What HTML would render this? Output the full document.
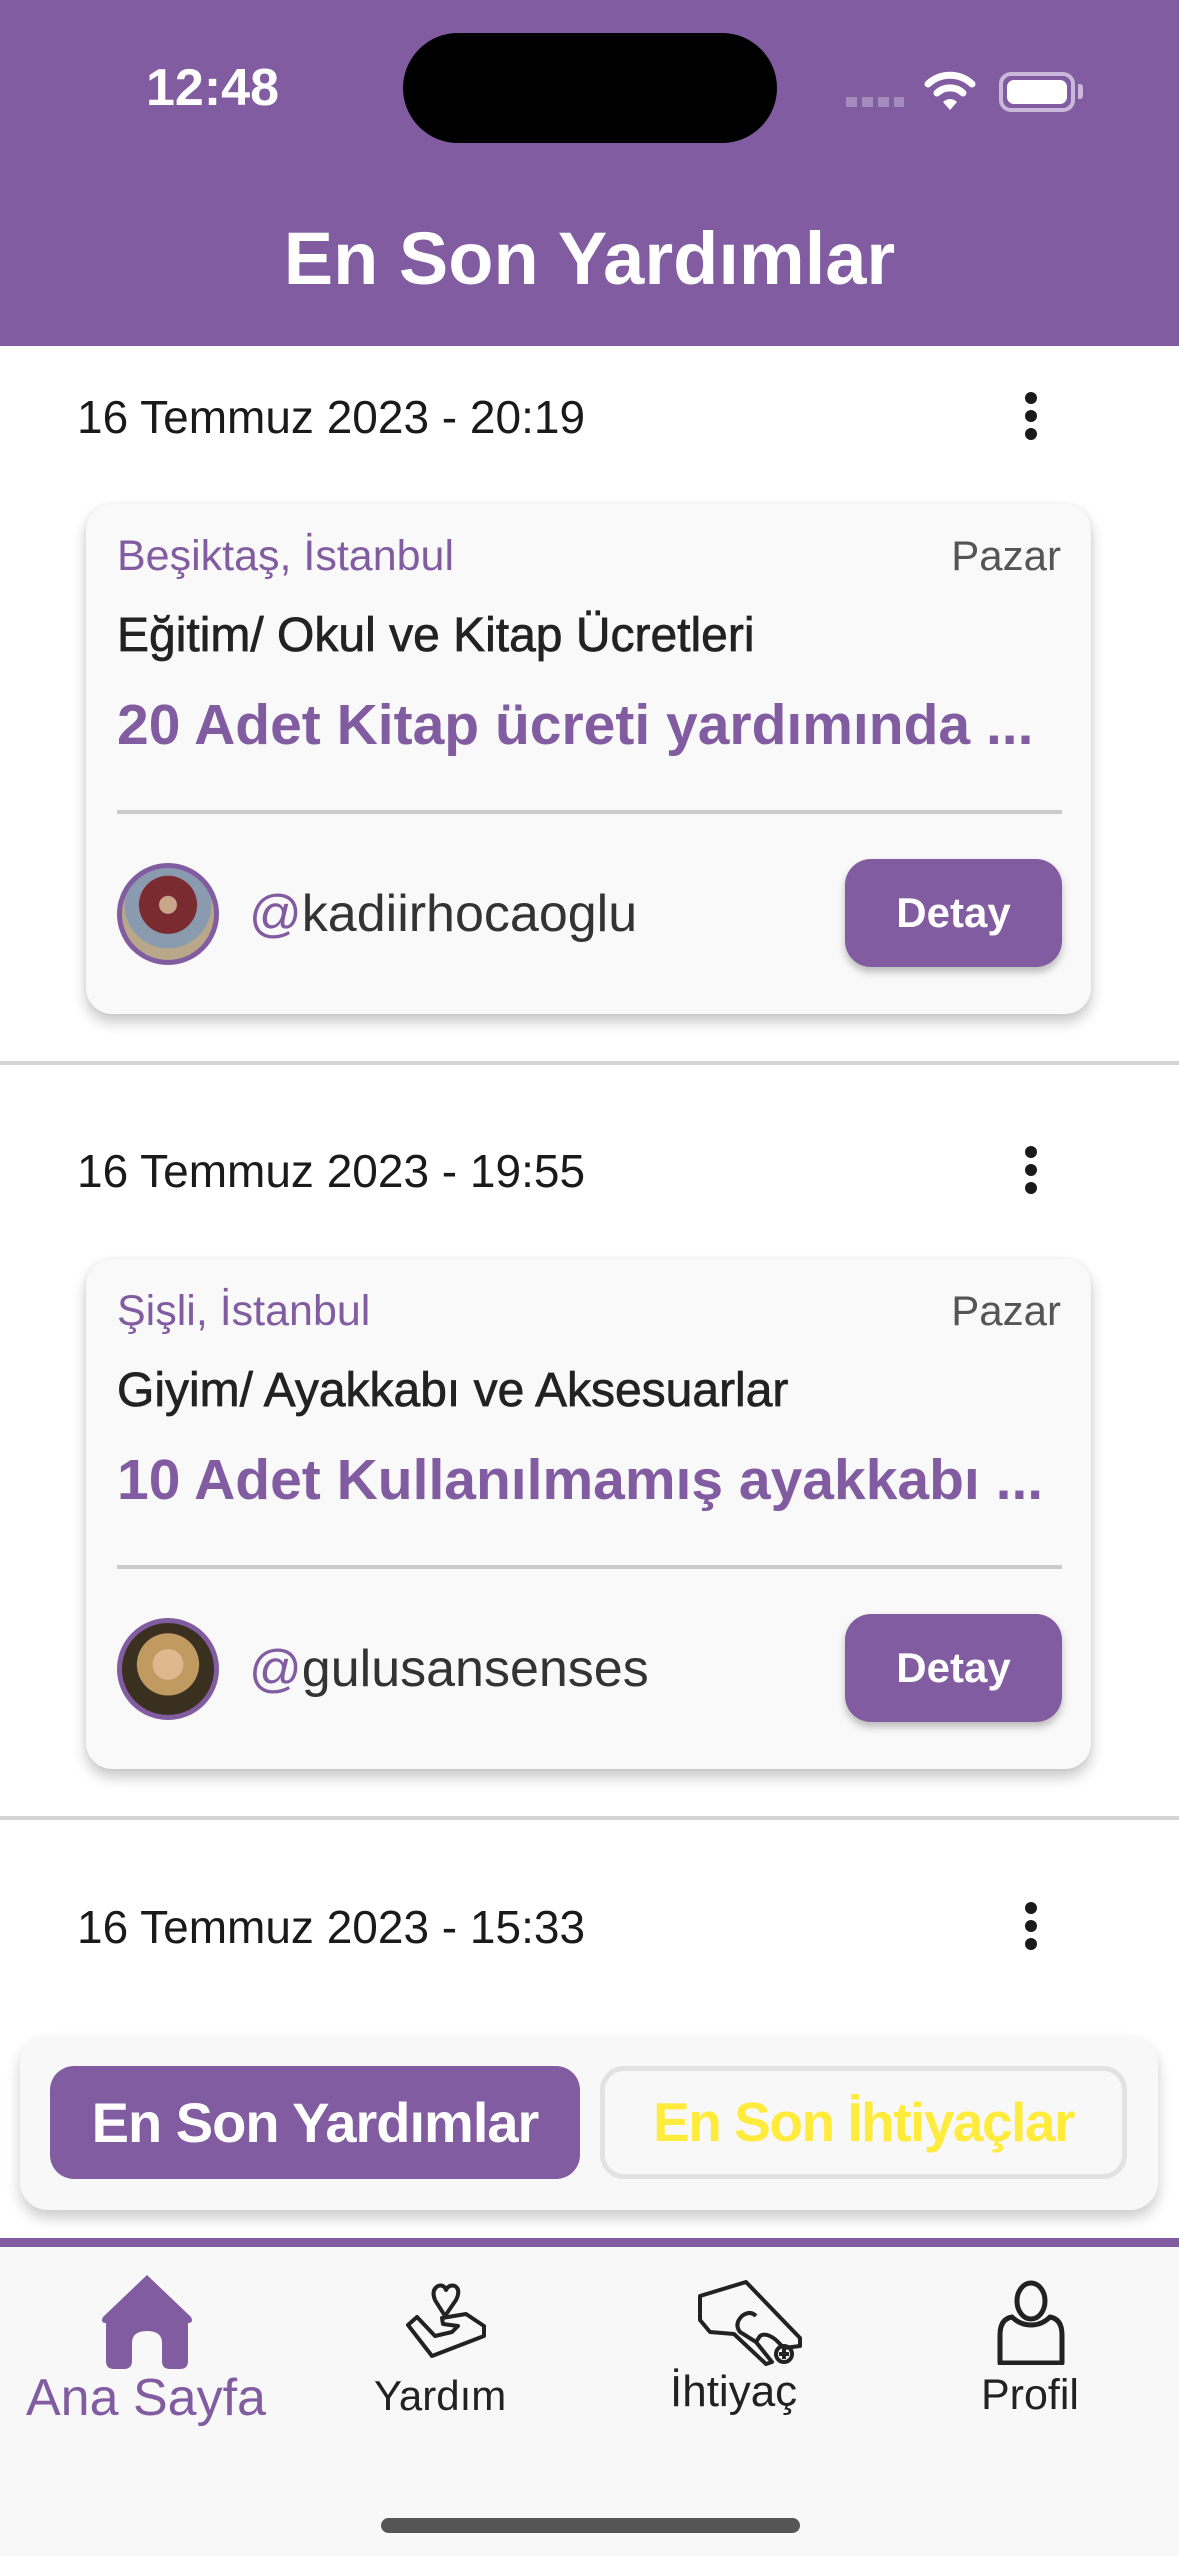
<!DOCTYPE html>
<html><head><meta charset="utf-8"><style>
*{margin:0;padding:0;box-sizing:border-box}
body{width:1179px;height:2556px;position:relative;background:#fff;font-family:"Liberation Sans",sans-serif;overflow:hidden}
.a{position:absolute;white-space:nowrap}
.p{color:#825ca1}
.card{position:absolute;left:86px;width:1005px;height:510px;background:#f9f9f9;border-radius:26px;box-shadow:0 8px 14px rgba(0,0,0,.22),0 0 4px rgba(0,0,0,.06)}
.sep{position:absolute;left:0;width:1179px;height:4px;background:#d4d4d4}
.date{position:absolute;left:77px;font-size:46px;color:#1a1a1a;line-height:1}
.dots{position:absolute;left:1023px;width:16px}
.dots i{display:block;width:12px;height:12px;border-radius:6px;background:#1a1a1a;margin:0 0 6px 2px}
.btn{position:absolute;left:759px;top:355px;width:217px;height:108px;background:#825ca1;border-radius:26px;color:#fff;font-weight:bold;font-size:42px;text-align:center;line-height:108px;box-shadow:0 5px 8px rgba(0,0,0,.25)}
.av{position:absolute;left:31px;top:359px;width:102px;height:102px;border-radius:51px;border:5px solid #825ca1}
</style></head><body>
<div class="a" style="left:0;top:0;width:1179px;height:346px;background:#825ca1"></div>
<div class="a" style="left:146px;top:58px;font-size:52px;font-weight:bold;color:#fff">12:48</div>
<div class="a" style="left:403px;top:33px;width:374px;height:110px;border-radius:55px;background:#000"></div>
<div class="a" style="left:846px;top:97px;width:58px;height:10px;background:repeating-linear-gradient(90deg,#a48cbf 0 11px,transparent 11px 16px)"></div>
<svg class="a" style="left:924px;top:68px" width="52" height="44" viewBox="0 0 52 44"><path d="M4 16 A32 32 0 0 1 48 16" stroke="#fff" stroke-width="7" fill="none" stroke-linecap="round"/><path d="M13 25 A19 19 0 0 1 39 25" stroke="#fff" stroke-width="7" fill="none" stroke-linecap="round"/><path d="M26 42 L19 34 A10 10 0 0 1 33 34 Z" fill="#fff"/></svg>
<div class="a" style="left:999px;top:72px;width:76px;height:40px;border:4px solid #c9b7dc;border-radius:12px;padding:4px"><div style="width:100%;height:100%;background:#fff;border-radius:7px"></div></div>
<div class="a" style="left:1078px;top:84px;width:5px;height:15px;background:#c9b7dc;border-radius:0 3px 3px 0"></div>
<div class="a" style="left:0;top:216px;width:1179px;text-align:center;font-size:74px;font-weight:bold;color:#fff">En Son Yardımlar</div>

<!-- item 1 -->
<div class="date" style="top:394px">16 Temmuz 2023 - 20:19</div>
<div class="dots" style="top:392px"><i></i><i></i><i></i></div>
<div class="card" style="top:504px">
 <div class="a p" style="left:31px;top:28px;font-size:43px">Beşiktaş, İstanbul</div>
 <div class="a" style="right:30px;top:28px;font-size:42px;color:#555">Pazar</div>
 <div class="a" style="left:31px;top:104px;font-size:48px;color:#222;-webkit-text-stroke:.7px #222">Eğitim/ Okul ve Kitap Ücretleri</div>
 <div class="a p" style="left:31px;top:188px;font-size:57px;font-weight:bold">20 Adet Kitap ücreti yardımında ...</div>
 <div class="a" style="left:31px;top:306px;width:945px;height:4px;background:#cbcbcb"></div>
 <div class="av" style="background:radial-gradient(circle at 50% 40%,#c9a58a 0 12%,#7a2b30 13% 40%,#8a9bb0 41% 60%,#b8a889 61%)"></div>
 <div class="a" style="left:163px;top:380px;font-size:52px;color:#333"><span class="p">@</span>kadiirhocaoglu</div>
 <div class="btn">Detay</div>
</div>
<div class="sep" style="top:1061px"></div>

<!-- item 2 -->
<div class="date" style="top:1148px">16 Temmuz 2023 - 19:55</div>
<div class="dots" style="top:1146px"><i></i><i></i><i></i></div>
<div class="card" style="top:1259px">
 <div class="a p" style="left:31px;top:28px;font-size:43px">Şişli, İstanbul</div>
 <div class="a" style="right:30px;top:28px;font-size:42px;color:#555">Pazar</div>
 <div class="a" style="left:31px;top:104px;font-size:48px;color:#222;-webkit-text-stroke:.7px #222">Giyim/ Ayakkabı ve Aksesuarlar</div>
 <div class="a p" style="left:31px;top:188px;font-size:57px;font-weight:bold">10 Adet Kullanılmamış ayakkabı ...</div>
 <div class="a" style="left:31px;top:306px;width:945px;height:4px;background:#cbcbcb"></div>
 <div class="av" style="background:radial-gradient(circle at 50% 45%,#e0b890 0 22%,#c09a60 23% 45%,#3a3020 46%)"></div>
 <div class="a" style="left:163px;top:380px;font-size:52px;color:#333"><span class="p">@</span>gulusansenses</div>
 <div class="btn">Detay</div>
</div>
<div class="sep" style="top:1816px"></div>

<div class="date" style="top:1904px">16 Temmuz 2023 - 15:33</div>
<div class="dots" style="top:1902px"><i></i><i></i><i></i></div>

<!-- segment -->
<div class="a" style="left:20px;top:2036px;width:1138px;height:174px;background:#f8f8f8;border-radius:28px;box-shadow:0 8px 14px rgba(0,0,0,.2)"></div>
<div class="a" style="left:50px;top:2066px;width:530px;height:113px;background:#825ca1;border-radius:24px;color:#fff;font-weight:bold;font-size:56px;text-align:center;line-height:113px;letter-spacing:-1px">En Son Yardımlar</div>
<div class="a" style="left:600px;top:2066px;width:527px;height:113px;border:5px solid #e2e2e2;border-radius:24px;color:#ffeb3b;font-weight:bold;font-size:55px;text-align:center;line-height:103px;letter-spacing:-1.5px">En Son İhtiyaçlar</div>

<!-- tab bar -->
<div class="a" style="left:0;top:2238px;width:1179px;height:9px;background:#825ca1"></div>
<div class="a" style="left:0;top:2247px;width:1179px;height:309px;background:#f8f8f8"></div>
<svg class="a" style="left:98px;top:2273px" width="98" height="97" viewBox="0 0 98 97"><path d="M49 2 L93 44 Q96 50 90 50 L90 88 Q90 96 82 96 L72 96 Q64 96 64 88 L64 70 Q64 58 49 58 Q34 58 34 70 L34 88 Q34 96 26 96 L16 96 Q8 96 8 88 L8 50 Q2 50 5 44 Z" fill="#825ca1"/></svg>
<div class="a p" style="left:26px;top:2368px;font-size:52px">Ana Sayfa</div>
<svg class="a" style="left:402px;top:2280px" width="90" height="80" viewBox="0 0 90 80" fill="none" stroke="#222" stroke-width="4" stroke-linejoin="round"><path d="M43 36 L33 20 Q29 10 36 6 Q42 4 44 10 Q47 4 53 6 Q59 10 54 20 Z"/><path d="M6 45 L30 76 L82 56 L82 46 L64 34 L40 38 L41 44 L56 46 L50 52 L33 56 L15 37 Z"/></svg>
<div class="a" style="left:374px;top:2372px;font-size:42px;color:#222">Yardım</div>
<svg class="a" style="left:696px;top:2280px" width="112" height="86" viewBox="0 0 112 86" fill="none" stroke="#222" stroke-width="4" stroke-linejoin="round"><path d="M4 16 L50 2 L104 58 L104 66 L88 68 L80 60 Q70 52 64 56 L60 62 L76 82 L70 84 L38 54 L14 52 L4 40 Z"/><path d="M60 36 Q54 30 46 36 Q38 44 44 52 L60 62"/><circle cx="88" cy="74" r="8"/><path d="M88 69 V79 M83 74 H93"/></svg>
<div class="a" style="left:670px;top:2367px;font-size:44px;color:#222">İhtiyaç</div>
<svg class="a" style="left:996px;top:2279px" width="70" height="86" viewBox="0 0 70 86" fill="none" stroke="#222" stroke-width="5" stroke-linejoin="round"><ellipse cx="35" cy="22" rx="14" ry="18"/><path d="M4 84 L4 56 Q4 40 16 38 Q24 46 35 46 Q46 46 54 38 Q66 40 66 56 L66 84 Z"/></svg>
<div class="a" style="left:981px;top:2371px;font-size:43px;color:#222">Profil</div>
<div class="a" style="left:381px;top:2518px;width:419px;height:15px;border-radius:8px;background:#555"></div>
</body></html>
